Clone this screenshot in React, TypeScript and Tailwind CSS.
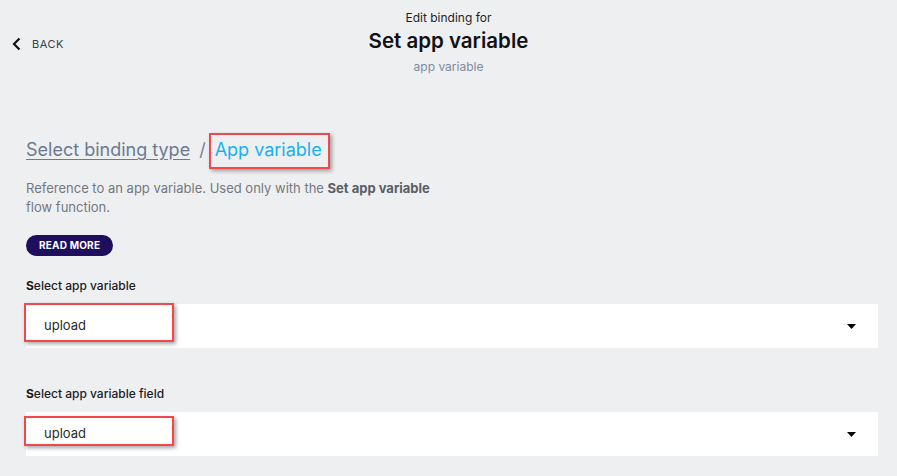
import React from 'react';

const font = { fontFamily: 'Inter, "Open Sans", sans-serif' };

const Caret = () => (
  <svg width="9" height="5" viewBox="0 0 9 5" className="text-black">
    <path d="M0 0h9L4.5 5z" fill="currentColor" />
  </svg>
);

const SelectField = ({
  label,
  value,
  mark,
}: {
  label: string;
  value: string;
  mark: string;
}) => (
  <div>
    <div className="text-[12px] font-medium text-[#1b1b1f] leading-[16px]">
      <span className="font-bold">S</span>
      {label.slice(1)}
    </div>
    <div className="relative mt-[10px] h-[44px] bg-white flex items-center justify-between pl-[18px] pr-[22px]">
      <span className="text-[13px] text-[#2a2a2e]">{value}</span>
      <Caret />
      <span className={`absolute left-[-2px] w-[150px] border-2 border-[#f2474b] shadow-[2px_2px_4px_rgba(0,0,0,0.35)] ${mark}`} />
    </div>
  </div>
);

export default function App() {
  return (
    <div className="w-[897px] h-[476px] bg-[#eeeff1] overflow-hidden" style={font}>
      <div className="relative pt-[10px] text-center">
        <button className="absolute left-[12px] top-[36px] flex items-center gap-[11px] text-[11px] tracking-[0.5px] text-[#3a3d4a]">
          <svg width="9" height="14" viewBox="0 0 9 14">
            <path d="M7.5 1.5L2 7l5.5 5.5" stroke="#111" strokeWidth="2.2" fill="none" />
          </svg>
          BACK
        </button>
        <div className="text-[12px] leading-[16px] text-[#1f1f24]">Edit binding for</div>
        <div className="text-[20.5px] leading-[26px] mt-[2px] font-semibold text-[#111]">Set app variable</div>
        <div className="text-[12px] leading-[16px] mt-[5px] text-[#7d8aa3]">app variable</div>
      </div>

      <div className="pl-[26px] pr-[19px] pt-[63px]">
        <div className="flex items-center text-[18px] leading-[24px]">
          <span className="text-[#6c7a91] underline underline-offset-[3px]">Select binding type</span>
          <span className="text-[#7b8291] ml-[9px] mr-[9px]">/</span>
          <span className="relative text-[#16b2f2]">
            App variable
            <span className="absolute left-[-6px] right-[-8px] top-[-5px] bottom-[-7px] border-2 border-[#f2474b] shadow-[2px_2px_4px_rgba(0,0,0,0.35)]" />
          </span>
        </div>

        <p className="mt-[17px] w-[432px] text-[13px] leading-[19px] text-[#74787f]">
          Reference to an app variable. Used only with the <b className="text-[#5a5e66]">Set app variable</b> flow function.
        </p>

        <button className="mt-[18px] h-[21px] px-[13px] rounded-full bg-[#1f0d5e] text-white text-[10px] font-bold tracking-[0.2px]">
          READ MORE
        </button>

        <div className="mt-[22px]">
          <SelectField label="Select app variable" value="upload" mark="top-[-1px] h-[39px]" />
        </div>
        <div className="mt-[38px]">
          <SelectField label="Select app variable field" value="upload" mark="top-[4px] h-[30px]" />
        </div>
      </div>
    </div>
  );
}
